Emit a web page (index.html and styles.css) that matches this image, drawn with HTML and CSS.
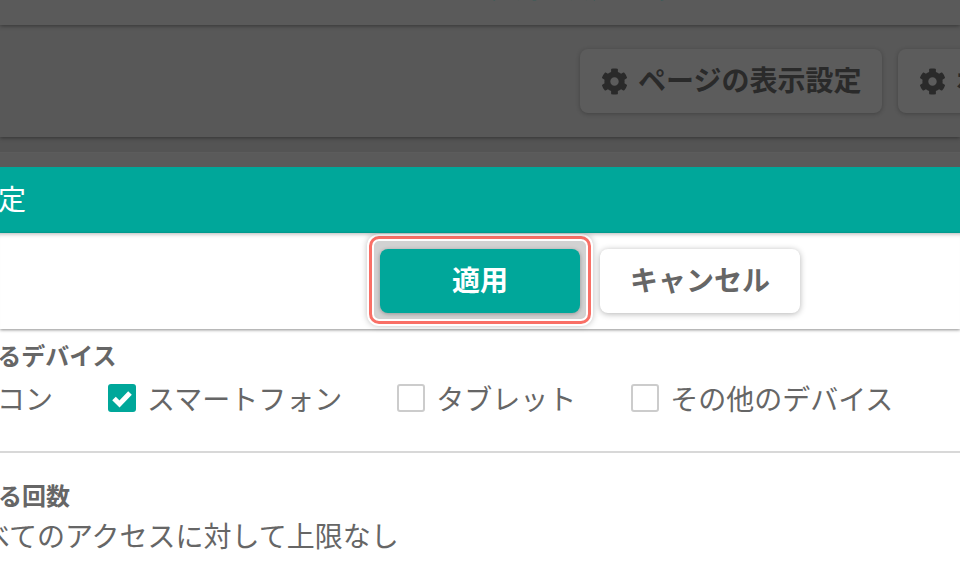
FILE: index.html
```html
<!DOCTYPE html>
<html lang="ja">
<head>
    <meta charset="UTF-8">
    <title>表示設定</title>
    <link rel="stylesheet" href="styles.css">
</head>
<body>
    <div class="backdrop">
        <div class="top-band">
            <span class="top-title">表示設定一覧</span>
        </div>
        <div class="tool-band">
            <button class="tool-btn">
                <svg class="gear" viewBox="0 0 512 512"><path d="M487.4 315.7l-42.6-24.6c4.3-23.2 4.3-47 0-70.2l42.6-24.6c4.9-2.8 7.1-8.6 5.5-14-11.1-35.6-30-67.8-54.7-94.6-3.8-4.1-10-5.1-14.8-2.3L380.8 110c-17.9-15.4-38.5-27.3-60.8-35.1V25.8c0-5.6-3.9-10.5-9.4-11.7-36.7-8.2-74.3-7.8-109.2 0-5.5 1.2-9.4 6.1-9.4 11.7V75c-22.2 7.9-42.8 19.8-60.8 35.1L88.7 85.5c-4.9-2.8-11-1.9-14.8 2.3-24.7 26.7-43.6 58.9-54.7 94.6-1.7 5.4.6 11.2 5.5 14L67.3 221c-4.3 23.2-4.3 47 0 70.2l-42.6 24.6c-4.9 2.8-7.1 8.6-5.5 14 11.1 35.6 30 67.8 54.7 94.6 3.8 4.1 10 5.1 14.8 2.3l42.6-24.6c17.9 15.4 38.5 27.3 60.8 35.1v49.2c0 5.6 3.9 10.5 9.4 11.7 36.7 8.2 74.3 7.8 109.2 0 5.5-1.2 9.4-6.1 9.4-11.7v-49.2c22.2-7.9 42.8-19.8 60.8-35.1l42.6 24.6c4.9 2.8 11 1.9 14.8-2.3 24.7-26.7 43.6-58.9 54.7-94.6 1.5-5.5-.7-11.3-5.6-14.1zM256 336c-44.1 0-80-35.9-80-80s35.9-80 80-80 80 35.9 80 80-35.9 80-80 80z"/></svg>
                ページの表示設定
            </button>
            <button class="tool-btn">
                <svg class="gear" viewBox="0 0 512 512"><path d="M487.4 315.7l-42.6-24.6c4.3-23.2 4.3-47 0-70.2l42.6-24.6c4.9-2.8 7.1-8.6 5.5-14-11.1-35.6-30-67.8-54.7-94.6-3.8-4.1-10-5.1-14.8-2.3L380.8 110c-17.9-15.4-38.5-27.3-60.8-35.1V25.8c0-5.6-3.9-10.5-9.4-11.7-36.7-8.2-74.3-7.8-109.2 0-5.5 1.2-9.4 6.1-9.4 11.7V75c-22.2 7.9-42.8 19.8-60.8 35.1L88.7 85.5c-4.9-2.8-11-1.9-14.8 2.3-24.7 26.7-43.6 58.9-54.7 94.6-1.7 5.4.6 11.2 5.5 14L67.3 221c-4.3 23.2-4.3 47 0 70.2l-42.6 24.6c-4.9 2.8-7.1 8.6-5.5 14 11.1 35.6 30 67.8 54.7 94.6 3.8 4.1 10 5.1 14.8 2.3l42.6-24.6c17.9 15.4 38.5 27.3 60.8 35.1v49.2c0 5.6 3.9 10.5 9.4 11.7 36.7 8.2 74.3 7.8 109.2 0 5.5-1.2 9.4-6.1 9.4-11.7v-49.2c22.2-7.9 42.8-19.8 60.8-35.1l42.6 24.6c4.9 2.8 11 1.9 14.8-2.3 24.7-26.7 43.6-58.9 54.7-94.6 1.5-5.5-.7-11.3-5.6-14.1zM256 336c-44.1 0-80-35.9-80-80s35.9-80 80-80 80 35.9 80 80-35.9 80-80 80z"/></svg>
                ポップアップ設定
            </button>
        </div>
        <div class="under-band"></div>
    </div>

    <div class="dialog">
        <div class="dialog-head"><span class="dialog-title">表示設定</span></div>
        <div class="dialog-actions">
            <div class="focus-ring"><button class="btn btn-apply">適用</button></div>
            <button class="btn btn-cancel">キャンセル</button>
        </div>
        <section class="group group-devices">
            <h3 class="group-label label-devices">対象となるデバイス</h3>
            <div class="checks">
                <label class="check">
                    <span class="box box-on">
                        <svg viewBox="0 0 28 28"><path d="M6 14.5l5.500 5.500 10.500-11" fill="none" stroke="#fff" stroke-width="5"/></svg>
                    </span>
                    パソコン
                </label>
                <label class="check">
                    <span class="box box-on">
                        <svg viewBox="0 0 28 28"><path d="M6 14.5l5.500 5.500 10.500-11" fill="none" stroke="#fff" stroke-width="5"/></svg>
                    </span>
                    スマートフォン
                </label>
                <label class="check"><span class="box"></span>タブレット</label>
                <label class="check"><span class="box"></span>その他のデバイス</label>
            </div>
        </section>
        <section class="group group-count">
            <h3 class="group-label label-count">表示する回数</h3>
            <p class="count-text">すべてのアクセスに対して上限なし</p>
        </section>
    </div>
</body>
</html>
```

FILE: styles.css
```css
* { box-sizing: border-box; }
html, body { height: 100%; }
body { margin: 0; overflow: hidden; background: #fff; color: #666; font-family: "Noto Sans CJK JP", "Noto Sans", sans-serif; }

.backdrop { height: 167px; background: #5a5a5a; overflow: hidden; }
.top-band { height: 25px; padding-left: 488px; box-shadow: 0 1px 4px rgba(0, 0, 0, 0.4); position: relative; z-index: 1; background: #5a5a5a; overflow: hidden; }
.top-title { display: block; margin-top: -34px; font-size: 34px; line-height: 34px; font-weight: bold; color: #0f5e58; white-space: nowrap; }
.tool-band { height: 112px; background: #585858; display: flex; gap: 16px; padding: 24px 0 0 580px; box-shadow: 0 1px 4px rgba(0, 0, 0, 0.4); position: relative; }
.under-band { height: 16px; background: #545454; border-bottom: 1px solid #5c5c5c; }

.tool-btn { flex: none; width: 302px; height: 64px; display: flex; align-items: center; gap: 10px; padding: 0 0 4px 21px; border: none; border-radius: 8px; background: #5c5c5c; color: #2a2a2a; font: bold 28px "Noto Sans CJK JP", sans-serif; box-shadow: 0 1px 4px rgba(0, 0, 0, 0.25); white-space: nowrap; }
.gear { width: 27px; height: 27px; margin-top: 4px; fill: #2a2a2a; flex: none; }

.dialog-head { height: 66px; background: #00a79a; display: flex; align-items: center; padding-bottom: 4px; overflow: hidden; }
.dialog-title { color: #fff; font-size: 28px; margin-left: -86px; white-space: nowrap; }

.dialog-actions { height: 96px; display: flex; align-items: flex-start; gap: 20px; padding: 16px 0 0 380px; box-shadow: 0 1px 3px rgba(0, 0, 0, 0.45), inset 0 5px 4px -4px rgba(0, 0, 0, 0.3); position: relative; }
.btn { width: 200px; height: 64px; flex: none; padding: 0 0 4px; border: none; border-radius: 8px; font: bold 28px "Noto Sans CJK JP", sans-serif; }
.btn-apply { display: block; background: #00a79a; color: #fff; box-shadow: 0 1px 4px rgba(0, 0, 0, 0.3); }
.btn-cancel { background: #fff; color: #666; box-shadow: 0 1px 6px rgba(0, 0, 0, 0.3); }
.focus-ring { position: relative; height: 64px; }
.focus-ring::after { content: ""; position: absolute; inset: -13px -11px -11px -11px; border: 3px solid #f96f66; border-radius: 10px; background: #d2d2d2; background-clip: padding-box; box-shadow: 0 0 0 2px #fff, 0 0 6px 2px rgba(0, 0, 0, 0.25), inset 0 0 0 2px #fff; z-index: -1; }

.group { overflow: hidden; white-space: nowrap; }
.group-devices { height: 124px; padding-top: 11px; border-bottom: 2px solid #d8d8d8; }
.group-count { padding-top: 27px; }
.group-label { font-size: 24px; line-height: 30px; font-weight: bold; margin: 0; }
.label-devices { margin-left: -98px; }
.label-count { margin-left: -74px; }

.checks { display: flex; align-items: center; margin: 9px 0 0 -98px; font-size: 28px; line-height: 38px; }
.check { display: flex; align-items: center; gap: 11px; margin-right: 55px; flex: none; }
.box { width: 28px; height: 28px; border: 2px solid #ccc; border-radius: 3px; background: #fff; display: block; flex: none; }
.box-on { border: none; background: #00a79a; }
.box-on svg { display: block; width: 28px; height: 28px; }

.count-text { margin: 5px 0 0 -44px; font-size: 28px; line-height: 40px; }
```
